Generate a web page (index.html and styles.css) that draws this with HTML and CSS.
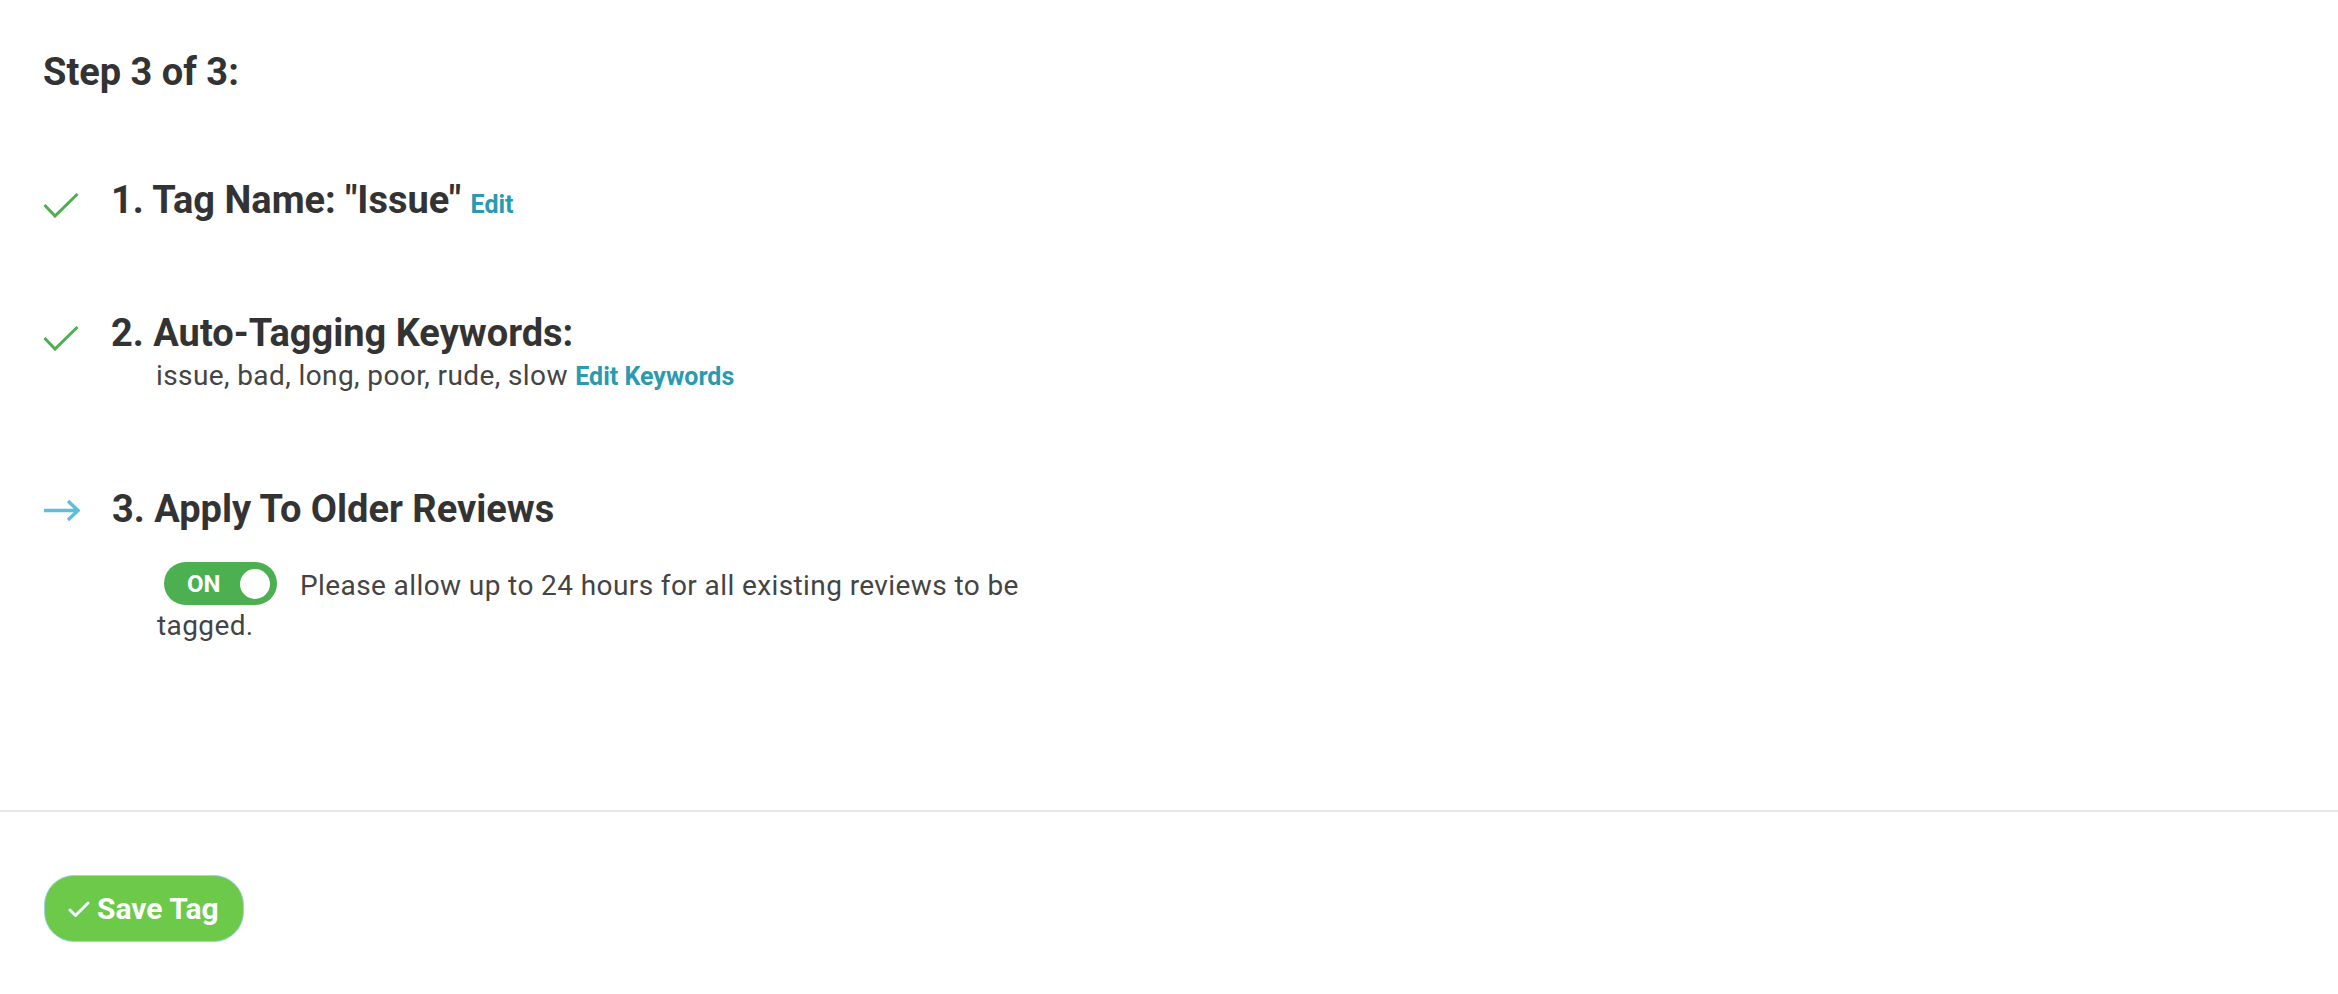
FILE: index.html
```html
<!DOCTYPE html>
<html lang="en">
  <head>
    <meta charset="UTF-8" />
    <meta name="viewport" content="width=device-width, initial-scale=1.0" />
    <title>Save Tag - Step 3 of 3</title>
    <link rel="stylesheet" href="styles.css">
  </head>
  <body>
    <div class="wizard">
      <h2 class="wizard-title">Step 3 of 3:</h2>

      <!-- Step 1 -->
      <div class="step">
        <svg class="step-icon" width="36" height="26" viewBox="0 0 36 26">
          <polyline points="1.5,13 12,24 34.5,2" fill="none" stroke="#4caf50" stroke-width="3" />
        </svg>
        <div class="step-body">
          <h3 class="step-name">1. Tag Name: "Issue" <a href="#" class="step-link">Edit</a></h3>
        </div>
      </div>

      <!-- Step 2 -->
      <div class="step step-keywords">
        <svg class="step-icon" width="36" height="26" viewBox="0 0 36 26">
          <polyline points="1.5,13 12,24 34.5,2" fill="none" stroke="#4caf50" stroke-width="3" />
        </svg>
        <div class="step-body">
          <h3 class="step-name">2. Auto-Tagging Keywords:</h3>
          <p class="step-text">issue, bad, long, poor, rude, slow <a href="#" class="step-link">Edit Keywords</a></p>
        </div>
      </div>

      <!-- Step 3 (current) -->
      <div class="step">
        <svg class="step-icon arrow" width="37" height="23" viewBox="0 0 37 23">
          <line x1="1" y1="11.5" x2="35" y2="11.5" stroke="#5bc0de" stroke-width="3.5" />
          <polyline points="25,2 35,11.5 25,21" fill="none" stroke="#5bc0de" stroke-width="3.5" />
        </svg>
        <div class="step-body">
          <h3 class="step-name">3. Apply To Older Reviews</h3>
          <div class="step-text apply">
            <label class="toggle">
              <span class="toggle-label">ON</span>
              <span class="toggle-knob"></span>
            </label><span class="apply-note">Please allow up to 24 hours for all existing reviews to be tagged.</span>
          </div>
        </div>
      </div>
    </div>

    <div class="wizard-footer">
      <button type="button" class="btn-save">
        <svg width="22" height="16" viewBox="0 0 22 16">
          <polyline points="2,9 7.5,14.5 20,2" fill="none" stroke="#f2fbff" stroke-width="3" stroke-linecap="round" stroke-linejoin="round" />
        </svg>
        Save Tag
      </button>
    </div>
  </body>
</html>
```
FILE: styles.css
```css
body {
  margin: 0;
  font-family: Roboto, "Liberation Sans", Arial, sans-serif;
  color: #333;
  background: #fff;
}
.wizard {
  padding: 50px 0 0 43px;
  height: 810px;
  box-sizing: border-box;
}
.wizard-title {
  margin: 0 0 84px;
  font-size: 38px;
  line-height: 44px;
  font-weight: 700;
  color: #333;
}
.step {
  display: flex;
  align-items: flex-start;
  gap: 32px;
  margin-bottom: 84px;
}
.step-keywords {
  margin-bottom: 94px;
}
.step-icon {
  flex: none;
  margin-top: 14px;
}
.step-icon.arrow {
  margin-top: 12px;
}
.step-name {
  margin: 0;
  font-size: 38px;
  line-height: 44px;
  font-weight: 700;
  color: #333;
}
.step-link {
  font-size: 25px;
  font-weight: 700;
  letter-spacing: 0;
  color: #2a9ab0;
  text-decoration: none;
}
.step-text {
  margin: 5px 0 0 45px;
  font-size: 28px;
  line-height: 32px;
  letter-spacing: 0.4px;
  color: #444;
}
.step-text.apply {
  margin-top: 31px;
  line-height: 40px;
  width: 880px;
}
.toggle {
  display: inline-flex;
  align-items: center;
  justify-content: space-between;
  box-sizing: border-box;
  width: 113px;
  height: 43px;
  margin: 0 23px 0 7px;
  padding: 0 7px 0 23px;
  border-radius: 22px;
  background: #4caf50;
  vertical-align: 3px;
  letter-spacing: 0;
}
.toggle-label {
  font-size: 24px;
  font-weight: 700;
  color: #fff;
}
.toggle-knob {
  width: 30px;
  height: 30px;
  border-radius: 50%;
  background: #fff;
}
.wizard-footer {
  border-top: 2px solid #e6e6e6;
  padding: 63px 0 0 44px;
}
.btn-save {
  display: inline-flex;
  align-items: center;
  gap: 7px;
  height: 67px;
  padding: 0 24px 0 23px;
  border: 1px solid #9fd3e3;
  border-radius: 30px;
  background: #6cc94a;
  color: #fff;
  font-family: Roboto, "Liberation Sans", Arial, sans-serif;
  font-size: 30px;
  font-weight: 700;
  cursor: pointer;
}
```
